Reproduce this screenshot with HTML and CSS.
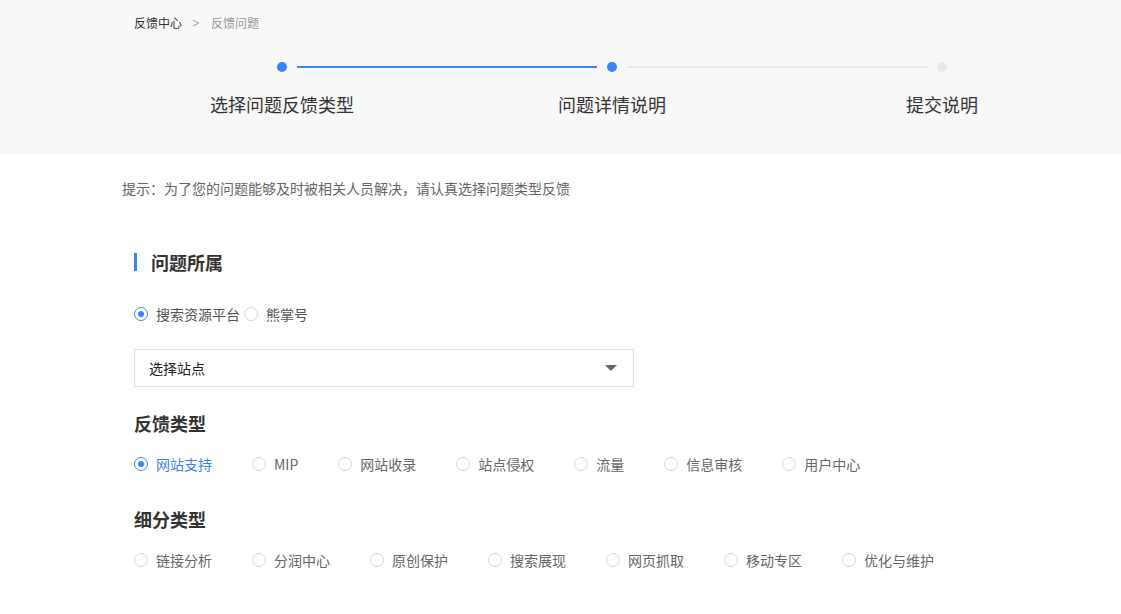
FILE: index.html
```html
<!DOCTYPE html>
<html lang="zh-CN">
<head>
<meta charset="utf-8">
<title>反馈问题</title>
<link rel="stylesheet" href="styles.css">
</head>
<body>
<header class="top">
  <nav class="crumbs">
    <span class="crumb-home">反馈中心</span>
    <span class="crumb-sep">&gt;</span>
    <span class="crumb-cur">反馈问题</span>
  </nav>
  <div class="track">
    <span class="dot active"></span>
    <span class="line active"></span>
    <span class="dot active"></span>
    <span class="line"></span>
    <span class="dot"></span>
  </div>
  <div class="step-labels">
    <div class="step-label">选择问题反馈类型</div>
    <div class="step-label">问题详情说明</div>
    <div class="step-label">提交说明</div>
  </div>
</header>

<main class="main">
  <p class="tip">提示：为了您的问题能够及时被相关人员解决，请认真选择问题类型反馈</p>

  <div class="form">
    <h2 class="section-title">问题所属</h2>

    <div class="radio-row tight">
      <label class="radio checked"><span class="circle"></span><span class="text dark">搜索资源平台</span></label>
      <label class="radio"><span class="circle"></span><span class="text dark">熊掌号</span></label>
    </div>

    <div class="select">
      <span class="select-text">选择站点</span>
      <span class="caret"></span>
    </div>

    <h3 class="group-title">反馈类型</h3>
    <div class="radio-row">
      <label class="radio checked"><span class="circle"></span><span class="text blue">网站支持</span></label>
      <label class="radio"><span class="circle"></span><span class="text">MIP</span></label>
      <label class="radio"><span class="circle"></span><span class="text">网站收录</span></label>
      <label class="radio"><span class="circle"></span><span class="text">站点侵权</span></label>
      <label class="radio"><span class="circle"></span><span class="text">流量</span></label>
      <label class="radio"><span class="circle"></span><span class="text">信息审核</span></label>
      <label class="radio"><span class="circle"></span><span class="text">用户中心</span></label>
    </div>

    <h3 class="group-title sub">细分类型</h3>
    <div class="radio-row">
      <label class="radio"><span class="circle"></span><span class="text">链接分析</span></label>
      <label class="radio"><span class="circle"></span><span class="text">分润中心</span></label>
      <label class="radio"><span class="circle"></span><span class="text">原创保护</span></label>
      <label class="radio"><span class="circle"></span><span class="text">搜索展现</span></label>
      <label class="radio"><span class="circle"></span><span class="text">网页抓取</span></label>
      <label class="radio"><span class="circle"></span><span class="text">移动专区</span></label>
      <label class="radio"><span class="circle"></span><span class="text">优化与维护</span></label>
    </div>
  </div>
</main>
</body>
</html>
```

FILE: styles.css
```css
* { box-sizing: border-box; }
html, body {
  margin: 0;
  padding: 0;
  background: #fff;
  font-family: "Noto Sans CJK SC", "Microsoft YaHei", "Noto Sans", sans-serif;
  color: #333;
}

.top {
  background: #f8f8f8;
  height: 155px;
  padding-top: 15px;
}
.crumbs {
  margin-left: 134px;
  font-size: 12px;
  line-height: 16px;
  display: flex;
  align-items: center;
}
.crumb-home { color: #333; }
.crumb-sep {
  color: #aaa;
  margin: 0 10px 0 9px;
  font-family: "DejaVu Sans", sans-serif;
  font-size: 12px;
  transform: scaleX(0.75);
}
.crumb-cur { color: #999; }

.track {
  display: flex;
  align-items: center;
  margin: 31px 0 0 277px;
  width: 670px;
  height: 10px;
}
.dot {
  width: 10px;
  height: 10px;
  border-radius: 50%;
  background: #e8e8e8;
  flex: none;
}
.dot.active { background: #3c82f8; }
.line {
  flex: 1;
  height: 2px;
  margin: 0 10px;
  background: #e8e8e8;
}
.line.active { background: #3c82f8; }

.step-labels {
  display: grid;
  grid-template-columns: 330px 330px 330px;
  margin: 20px 0 0 117px;
}
.step-label {
  text-align: center;
  font-size: 18px;
  line-height: 24px;
  color: #333;
}

.main { padding-top: 23px; }
.tip {
  margin: 0 0 0 122px;
  font-size: 14px;
  line-height: 20px;
  color: #666;
}
.form { margin-left: 134px; }

.section-title {
  font-size: 18px;
  line-height: 24px;
  font-weight: bold;
  color: #333;
  border-left: 3px solid #3c82f8;
  padding-left: 14px;
  height: 18px;
  display: flex;
  align-items: center;
  margin: 55px 0 0 0;
}

.radio-row {
  display: flex;
  align-items: center;
  margin-top: 19px;
  height: 20px;
}
.radio-row.tight { margin-top: 33px; }
.radio {
  display: flex;
  align-items: center;
  margin-right: 40px;
  font-size: 14px;
  line-height: 20px;
  color: #666;
}
.radio-row.tight .radio { margin-right: 4px; }
.circle {
  width: 14px;
  height: 14px;
  border-radius: 50%;
  border: 1px solid #d9d9d9;
  background: #fff;
  margin-right: 8px;
  flex: none;
  display: flex;
  align-items: center;
  justify-content: center;
}
.radio.checked .circle { border-color: #3c82f8; }
.radio.checked .circle::after {
  content: "";
  width: 6px;
  height: 6px;
  border-radius: 50%;
  background: #3c82f8;
}
.text.dark { color: #555; }
.text.blue { color: #3c82f8; }

.select {
  margin-top: 25px;
  width: 500px;
  height: 38px;
  border: 1px solid #e0e0e0;
  background: #fff;
  display: flex;
  align-items: center;
  justify-content: space-between;
  padding: 0 16px 0 14px;
}
.select-text {
  font-size: 14px;
  color: #222;
}
.caret {
  width: 0;
  height: 0;
  border-left: 6px solid transparent;
  border-right: 6px solid transparent;
  border-top: 6px solid #666;
}

.group-title {
  margin: 24px 0 0 0;
  font-size: 18px;
  line-height: 24px;
  font-weight: bold;
  color: #333;
}
.group-title.sub { margin-top: 33px; }
```
